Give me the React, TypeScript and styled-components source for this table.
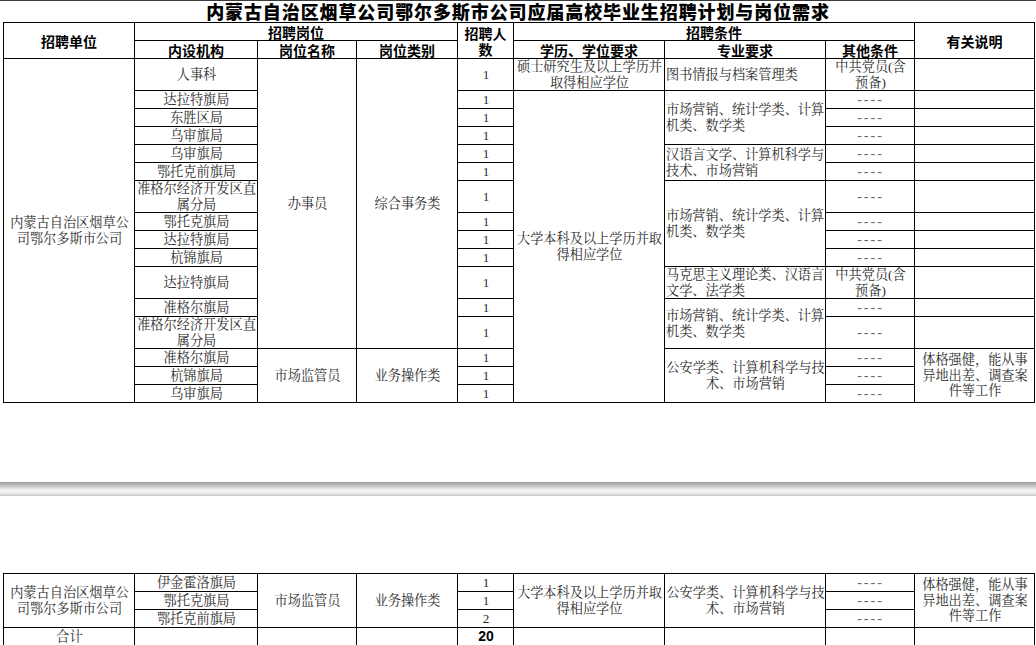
import styled, { createGlobalStyle } from "styled-components";

const GlobalStyle = createGlobalStyle`
  html, body {
    margin: 0;
    padding: 0;
    background: #fff;
  }
  body {
    font-family: "Liberation Serif", "Noto Serif CJK SC", "Noto Sans CJK SC", serif;
  }
`;

const UNIT = "内蒙古自治区烟草公\n司鄂尔多斯市公司";
const DEGREE = "大学本科及以上学历并取\n得相应学位";
const MARKET = "市场营销、统计学类、计算\n机类、数学类";
const POLICE = "公安学类、计算机科学与技\n术、市场营销";
const NOTE = "体格强健，能从事\n异地出差、调查案\n件等工作";
const PARTY = "中共党员(含\n预备)";

export default function App() {
  return (
    <Page>
      <GlobalStyle />
      <Title>内蒙古自治区烟草公司鄂尔多斯市公司应届高校毕业生招聘计划与岗位需求</Title>
      <Sheet>
        <Cols />
        <thead>
          <Row $h={18}>
            <Head rowSpan={2}>招聘单位</Head>
            <Head colSpan={3}>招聘岗位</Head>
            <Head rowSpan={2}>招聘人<br />数</Head>
            <Head colSpan={3}>招聘条件</Head>
            <Head rowSpan={2}>有关说明</Head>
          </Row>
          <Row $h={18}>
            <Head>内设机构</Head>
            <Head>岗位名称</Head>
            <Head>岗位类别</Head>
            <Head>学历、学位要求</Head>
            <Head>专业要求</Head>
            <Head>其他条件</Head>
          </Row>
        </thead>
        <tbody>
          <Row $h={32}>
            <Cell rowSpan={16}>{UNIT}</Cell>
            <Cell>人事科</Cell>
            <Cell rowSpan={13}>办事员</Cell>
            <Cell rowSpan={13}>综合事务类</Cell>
            <Cell>1</Cell>
            <Cell>{"硕士研究生及以上学历并\n取得相应学位"}</Cell>
            <Cell $align="left">图书情报与档案管理类</Cell>
            <Cell>{PARTY}</Cell>
            <Cell />
          </Row>
          <Row $h={18}>
            <Cell>达拉特旗局</Cell>
            <Cell>1</Cell>
            <Cell rowSpan={15}>{DEGREE}</Cell>
            <Cell rowSpan={3} $align="left">{MARKET}</Cell>
            <Cell><Dash>----</Dash></Cell>
            <Cell />
          </Row>
          <Row $h={18}>
            <Cell>东胜区局</Cell>
            <Cell>1</Cell>
            <Cell><Dash>----</Dash></Cell>
            <Cell />
          </Row>
          <Row $h={18}>
            <Cell>乌审旗局</Cell>
            <Cell>1</Cell>
            <Cell><Dash>----</Dash></Cell>
            <Cell />
          </Row>
          <Row $h={18}>
            <Cell>乌审旗局</Cell>
            <Cell>1</Cell>
            <Cell rowSpan={2} $align="left">{"汉语言文学、计算机科学与\n技术、市场营销"}</Cell>
            <Cell><Dash>----</Dash></Cell>
            <Cell />
          </Row>
          <Row $h={18}>
            <Cell>鄂托克前旗局</Cell>
            <Cell>1</Cell>
            <Cell><Dash>----</Dash></Cell>
            <Cell />
          </Row>
          <Row $h={32}>
            <Cell>{"准格尔经济开发区直\n属分局"}</Cell>
            <Cell>1</Cell>
            <Cell rowSpan={4} $align="left">{MARKET}</Cell>
            <Cell><Dash>----</Dash></Cell>
            <Cell />
          </Row>
          <Row $h={18}>
            <Cell>鄂托克旗局</Cell>
            <Cell>1</Cell>
            <Cell><Dash>----</Dash></Cell>
            <Cell />
          </Row>
          <Row $h={18}>
            <Cell>达拉特旗局</Cell>
            <Cell>1</Cell>
            <Cell><Dash>----</Dash></Cell>
            <Cell />
          </Row>
          <Row $h={18}>
            <Cell>杭锦旗局</Cell>
            <Cell>1</Cell>
            <Cell><Dash>----</Dash></Cell>
            <Cell />
          </Row>
          <Row $h={32}>
            <Cell>达拉特旗局</Cell>
            <Cell>1</Cell>
            <Cell $align="left">{"马克思主义理论类、汉语言\n文学、法学类"}</Cell>
            <Cell>{PARTY}</Cell>
            <Cell />
          </Row>
          <Row $h={18}>
            <Cell>准格尔旗局</Cell>
            <Cell>1</Cell>
            <Cell rowSpan={2} $align="left">{MARKET}</Cell>
            <Cell><Dash>----</Dash></Cell>
            <Cell />
          </Row>
          <Row $h={32}>
            <Cell>{"准格尔经济开发区直\n属分局"}</Cell>
            <Cell>1</Cell>
            <Cell><Dash>----</Dash></Cell>
            <Cell />
          </Row>
          <Row $h={18}>
            <Cell>准格尔旗局</Cell>
            <Cell rowSpan={3}>市场监管员</Cell>
            <Cell rowSpan={3}>业务操作类</Cell>
            <Cell>1</Cell>
            <Cell rowSpan={3}>{POLICE}</Cell>
            <Cell><Dash>----</Dash></Cell>
            <Cell rowSpan={3}>{NOTE}</Cell>
          </Row>
          <Row $h={18}>
            <Cell>杭锦旗局</Cell>
            <Cell>1</Cell>
            <Cell><Dash>----</Dash></Cell>
          </Row>
          <Row $h={18}>
            <Cell>乌审旗局</Cell>
            <Cell>1</Cell>
            <Cell><Dash>----</Dash></Cell>
          </Row>
        </tbody>
      </Sheet>

      <PageBreak />

      <Sheet>
        <Cols />
        <tbody>
          <Row $h={18}>
            <Cell rowSpan={3}>{UNIT}</Cell>
            <Cell>伊金霍洛旗局</Cell>
            <Cell rowSpan={3}>市场监管员</Cell>
            <Cell rowSpan={3}>业务操作类</Cell>
            <Cell>1</Cell>
            <Cell rowSpan={3}>{DEGREE}</Cell>
            <Cell rowSpan={3}>{POLICE}</Cell>
            <Cell><Dash>----</Dash></Cell>
            <Cell rowSpan={3}>{NOTE}</Cell>
          </Row>
          <Row $h={18}>
            <Cell>鄂托克旗局</Cell>
            <Cell>1</Cell>
            <Cell><Dash>----</Dash></Cell>
          </Row>
          <Row $h={18}>
            <Cell>鄂托克前旗局</Cell>
            <Cell>2</Cell>
            <Cell><Dash>----</Dash></Cell>
          </Row>
          <Row $h={18}>
            <Cell>合计</Cell>
            <Cell />
            <Cell />
            <Cell />
            <Total>20</Total>
            <Cell />
            <Cell />
            <Cell />
            <Cell />
          </Row>
        </tbody>
      </Sheet>
    </Page>
  );
}

function Cols() {
  return (
    <colgroup>
      {[131, 123, 99, 101, 56, 151, 161, 89, 120].map((w, i) => (
        <col key={i} style={{ width: w }} />
      ))}
    </colgroup>
  );
}

const Page = styled.div`
  width: 1036px;
  padding: 0 2px 0 3px;
  box-sizing: border-box;
`;

const Title = styled.h1`
  margin: 0 -2px 0 -3px;
  height: 22px;
  box-sizing: border-box;
  border-top: 1px solid #3a3a3a;
  font-family: "Noto Sans CJK SC", sans-serif;
  font-size: 18px;
  font-weight: 900;
  line-height: 20px;
  text-align: center;
  color: #000;
  letter-spacing: 0.9px;
`;

const Sheet = styled.table`
  width: 1031px;
  table-layout: fixed;
  border-collapse: collapse;
  border: 1.5px solid #000;
`;

const Row = styled.tr<{ $h: number }>`
  height: ${(p) => p.$h}px;
`;

const Head = styled.th`
  border: 1px solid #000;
  padding: 0;
  font-family: "Noto Sans CJK SC", sans-serif;
  font-size: 14px;
  font-weight: 700;
  line-height: 16px;
  color: #000;
  text-align: center;
  vertical-align: middle;
`;

const Cell = styled.td<{ $align?: "left" | "center" }>`
  border: 1px solid #000;
  padding: 0 0 0 1px;
  font-size: 13.2px;
  line-height: 15.5px;
  color: #2b2b2b;
  text-align: ${(p) => p.$align ?? "center"};
  vertical-align: middle;
  white-space: pre;
  overflow: visible;
`;

const Total = styled(Cell)`
  font-family: "Liberation Sans", sans-serif;
  font-weight: 700;
  font-size: 14px;
  color: #000;
`;

const Dash = styled.span`
  color: #6a6a6a;
  letter-spacing: 2px;
  font-size: 14px;
`;

const PageBreak = styled.div`
  height: 14px;
  margin: 79px -2px 77px -3px;
  background: linear-gradient(
    to bottom,
    #9c9c9c 0%,
    #b8b8b8 20%,
    #e2e2e2 45%,
    #f3f3f3 60%,
    #ececec 80%,
    #c4c4c4 100%
  );
`;
